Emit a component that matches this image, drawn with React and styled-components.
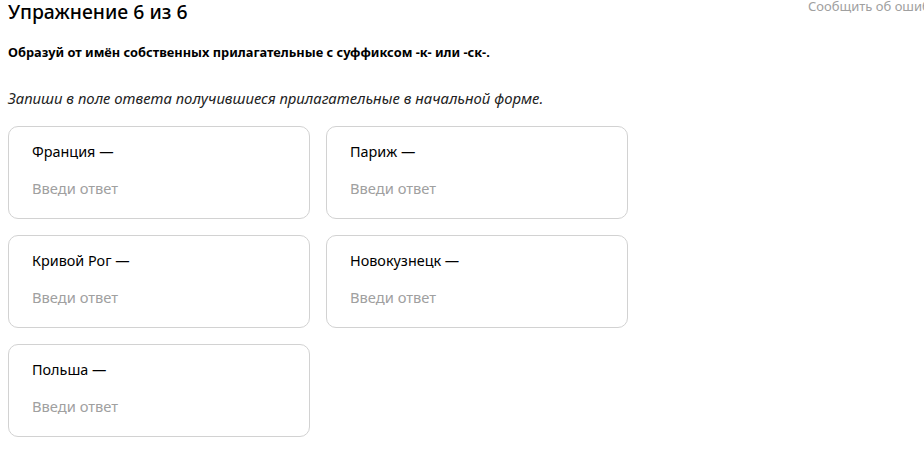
import React from 'react';
import styled, { createGlobalStyle } from 'styled-components';

const GlobalStyle = createGlobalStyle`
  html, body {
    margin: 0;
    padding: 0;
    background: #fff;
    overflow: hidden;
  }
  body {
    font-family: "Noto Sans", "Open Sans", sans-serif;
    color: #000;
  }
`;

const Page = styled.div`
  position: relative;
  width: 924px;
  height: 460px;
  padding: 0 8px;
  box-sizing: border-box;
  overflow: hidden;
`;

const Title = styled.h1`
  margin: 0;
  padding-top: 1px;
  font-size: 19.4px;
  font-weight: 500;
  line-height: 22px;
`;

const ReportLink = styled.a`
  position: absolute;
  top: -3px;
  left: 808px;
  font-size: 13px;
  color: #a0a0a0;
  white-space: nowrap;
  text-decoration: none;
`;

const Task = styled.p`
  margin: 20px 0 0;
  font-size: 12.8px;
  font-weight: 700;
  line-height: 18px;
`;

const Hint = styled.p`
  margin: 27px 0 0;
  font-size: 14.9px;
  font-style: italic;
  line-height: 20px;
  color: #222;
`;

const Grid = styled.div`
  display: grid;
  grid-template-columns: 302px 302px;
  gap: 16px;
  margin-top: 18px;
`;

const Card = styled.label`
  display: flex;
  flex-direction: column;
  height: 93px;
  box-sizing: border-box;
  padding: 15px 23px 0;
  border: 1px solid #d2d2d2;
  border-radius: 10px;
`;

const Word = styled.span`
  font-size: 14.4px;
  line-height: 20px;
  color: #000;
`;

const Answer = styled.input`
  margin-top: 16px;
  border: none;
  outline: none;
  padding: 0;
  font-family: inherit;
  font-size: 14.7px;
  line-height: 20px;
  color: #000;
  background: transparent;

  &::placeholder {
    color: #a0a0a0;
  }
`;

const words = ['Франция', 'Париж', 'Кривой Рог', 'Новокузнецк', 'Польша'];

export default function App() {
  return (
    <Page>
      <GlobalStyle />
      <Title>Упражнение 6 из 6</Title>
      <ReportLink href="#">Сообщить об ошибке</ReportLink>
      <Task>Образуй от имён собственных прилагательные с суффиксом -к- или -ск-.</Task>
      <Hint>Запиши в поле ответа получившиеся прилагательные в начальной форме.</Hint>
      <Grid>
        {words.map((w) => (
          <Card key={w}>
            <Word>{w} —</Word>
            <Answer placeholder="Введи ответ" />
          </Card>
        ))}
      </Grid>
    </Page>
  );
}
